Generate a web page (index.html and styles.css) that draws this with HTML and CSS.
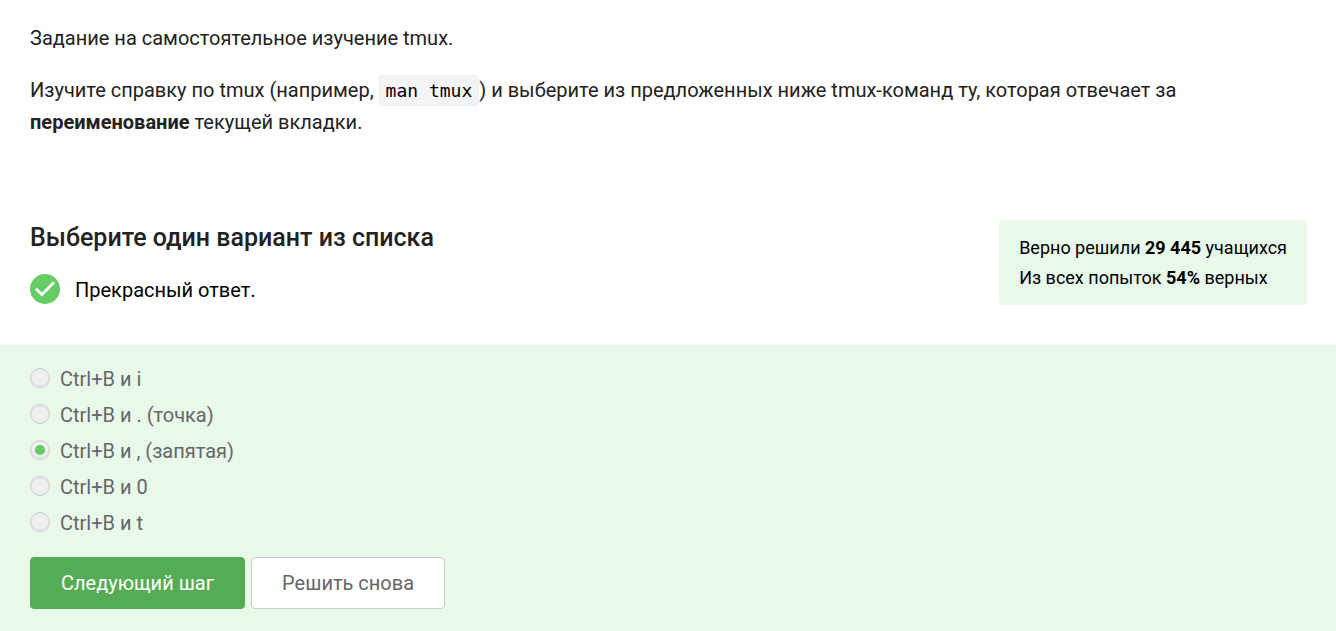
FILE: index.html
```
<!DOCTYPE html>
<html lang="ru">
<head>
<meta charset="utf-8">
<title>Задание на самостоятельное изучение tmux</title>
<link rel="stylesheet" href="styles.css">
</head>
<body>
<main class="step">
  <article class="intro">
    <p>Задание на самостоятельное изучение tmux.</p>
    <p>Изучите справку по tmux (например, <code>man tmux</code>) и выберите из предложенных ниже tmux-команд ту, которая отвечает за <strong>переименование</strong> текущей вкладки.</p>
  </article>
  <form class="quiz">
    <header class="summary">
      <div class="status">
        <h2 id="question">Выберите один вариант из списка</h2>
        <p class="verdict">
          <svg class="check" viewBox="0 0 30 30" aria-hidden="true"><circle cx="15" cy="15" r="15" fill="#66cc66"/><path d="M5.800 14.800L12 20.500L24 8.300" fill="none" stroke="#fff" stroke-width="2.800"/></svg>
          Прекрасный ответ.
        </p>
      </div>
      <aside class="stats">
        <p>Верно решили <strong>29 445</strong> учащихся</p>
        <p>Из всех попыток <strong>54%</strong> верных</p>
      </aside>
    </header>
    <section class="answers">
      <div class="options" role="radiogroup" aria-labelledby="question">
        <label class="option"><input type="radio" name="answer" disabled>Ctrl+B и i</label>
        <label class="option"><input type="radio" name="answer" disabled>Ctrl+B и . (точка)</label>
        <label class="option"><input type="radio" name="answer" checked disabled>Ctrl+B и , (запятая)</label>
        <label class="option"><input type="radio" name="answer" disabled>Ctrl+B и 0</label>
        <label class="option"><input type="radio" name="answer" disabled>Ctrl+B и t</label>
      </div>
      <div class="actions">
        <button type="button" class="button primary">Следующий шаг</button>
        <button type="button" class="button">Решить снова</button>
      </div>
    </section>
  </form>
</main>
</body>
</html>
```
FILE: styles.css
```
* {
  box-sizing: border-box;
}

body {
  margin: 0;
  background: #fff;
  color: #222;
  font: 20px/32px Roboto, "Open Sans", sans-serif;
}

p,
h2 {
  margin: 0;
}

.step {
  display: flex;
  flex-direction: column;
  min-height: 100vh;
}

.intro {
  display: grid;
  gap: 20px;
  padding: 22px 30px 82px;
}

.intro code {
  padding: 4px 6px;
  border: 1px solid #eceef1;
  border-radius: 4px;
  background: #f3f4f6;
  color: #000;
  font: 18px/20px "DejaVu Sans Mono", monospace;
}

.quiz {
  display: flex;
  flex: 1;
  flex-direction: column;
}

.summary {
  display: flex;
  align-items: flex-start;
  justify-content: space-between;
  padding: 0 29px 39px 30px;
}

h2 {
  padding-top: 2px;
  font-size: 25px;
  font-weight: 500;
}

.verdict {
  display: flex;
  align-items: flex-start;
  gap: 15px;
  margin-top: 20px;
  color: #000;
}

.check {
  width: 30px;
  height: 30px;
}

.stats {
  padding: 13px 20px 12px;
  border-radius: 4px;
  background: #e8f8e9;
  color: #000;
  font-size: 18px;
  line-height: 30px;
}

.answers {
  flex: 1;
  padding: 18px 30px 22px;
  background: #e8f8e9;
}

.options {
  display: grid;
  gap: 4px;
  color: #666;
}

.option {
  display: flex;
  align-items: flex-start;
  gap: 10px;
}

.option input {
  appearance: none;
  display: grid;
  place-items: center;
  width: 20px;
  height: 20px;
  margin: 5px 0 0;
  border: 1px solid #ccc;
  border-radius: 50%;
  background: #eee;
}

.option input:checked::before {
  width: 10px;
  height: 10px;
  border-radius: 50%;
  background: #66cc66;
  content: "";
}

.actions {
  display: flex;
  gap: 6px;
  margin-top: 18px;
}

.button {
  height: 52px;
  padding: 0 30px;
  border: 1px solid #ccc;
  border-radius: 4px;
  background: #fff;
  color: #666;
  font: inherit;
}

.primary {
  border-color: #54ad54;
  background: #54ad54;
  color: #fff;
}
```
